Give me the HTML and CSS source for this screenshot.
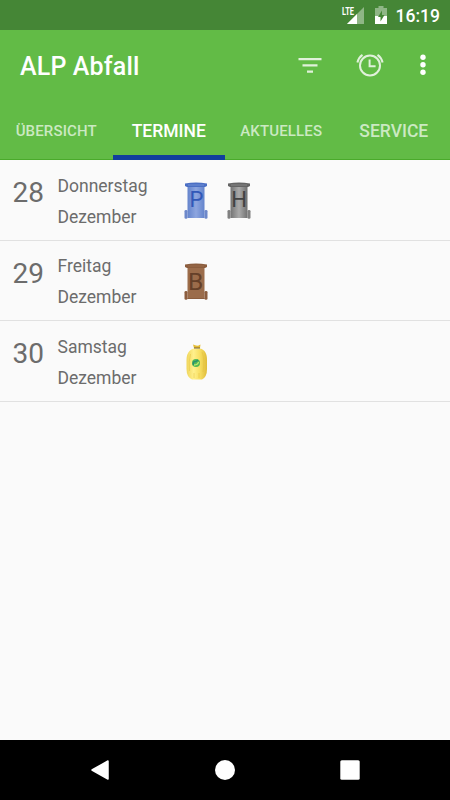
FILE: index.html
```
<!DOCTYPE html>
<html lang="de">
<head>
    <meta charset="UTF-8">
    <title>ALP Abfall</title>
    <link rel="stylesheet" href="styles.css">
</head>
<body>
<div class="status-bar">
    <svg class="signal" width="24" height="20" viewBox="0 0 24 20">
        <path d="M23 1v17H6z" fill="#fff" opacity=".4"/>
        <path d="M16 8v10H6z" fill="#fff"/>
        <text class="lte" x="1" y="8.7" textLength="12" lengthAdjust="spacingAndGlyphs">LTE</text>
    </svg>
    <svg class="battery" width="12" height="20" viewBox="0 0 12 20">
        <path d="M0 3h3.500V1h5v2H12v8H0z" fill="#fff" opacity=".4"/>
        <path d="M0 11h12v8H0z" fill="#fff"/>
        <path d="M7 5.500L3 12h2.500v4.500L9.500 10H7z" fill="#458636"/>
    </svg>
    <span class="clock">16:19</span>
</div>

<header class="toolbar">
    <h1 class="title">ALP Abfall</h1>
    <svg class="filter" width="24" height="18" viewBox="0 0 24 18">
        <path d="M.5 1h23v2.300H.5zM4.500 7.300h15v2.200h-15zM9 13.500h6v2.300H9z"/>
    </svg>
    <svg class="alarm" width="28" height="26" viewBox="0 0 28 26">
        <circle cx="14" cy="13.500" r="10"/>
        <path d="M13.600 7.500v6.700h6M1.400 10.500Q2.500 5.500 6.500 2.800M26.600 10.500Q25.500 5.500 21.500 2.800"/>
    </svg>
    <svg class="more" width="6" height="22" viewBox="0 0 6 22">
        <circle cx="3" cy="3.300" r="2.700"/>
        <circle cx="3" cy="10.800" r="2.700"/>
        <circle cx="3" cy="18.300" r="2.700"/>
    </svg>
</header>

<nav class="tabs">
    <a class="tab small">ÜBERSICHT</a>
    <a class="tab active">TERMINE</a>
    <a class="tab small">AKTUELLES</a>
    <a class="tab">SERVICE</a>
</nav>

<main class="dates">
    <div class="row">
        <span class="day">28</span>
        <div class="names"><span>Donnerstag</span><span>Dezember</span></div>
        <div class="bins">
            <svg class="bin" width="24" height="38" viewBox="0 0 24 38">
                <defs>
                    <linearGradient id="blue"><stop offset="0" stop-color="#6484cc"/><stop offset=".5" stop-color="#8ea6df"/><stop offset="1" stop-color="#6484cc"/></linearGradient>
                </defs>
                <path d="M3.500 5h17v31h-17z" fill="url(#blue)"/>
                <path d="M1 1.500q11-2 22 0V4l-2 1H3L1 4z" fill="#4b6fc4"/>
                <path d="M4 3h16" stroke="#708fd4"/>
                <rect x=".5" y="28" width="3" height="8.700" rx="1.300" fill="#6d88ca"/>
                <rect x="20.500" y="28" width="3" height="8.700" rx="1.300" fill="#6d88ca"/>
                <text x="12.500" y="25.300" fill="#3158b8">P</text>
            </svg>
            <svg class="bin" width="24" height="38" viewBox="0 0 24 38">
                <defs>
                    <linearGradient id="gray"><stop offset="0" stop-color="#747474"/><stop offset=".5" stop-color="#aaa"/><stop offset="1" stop-color="#707070"/></linearGradient>
                </defs>
                <path d="M3.500 5h17v31h-17z" fill="url(#gray)"/>
                <path d="M1 1.500q11-2 22 0V4l-2 1H3L1 4z" fill="#646464"/>
                <path d="M4 3h16" stroke="#858585"/>
                <rect x=".5" y="28" width="3" height="8.700" rx="1.300" fill="#808080"/>
                <rect x="20.500" y="28" width="3" height="8.700" rx="1.300" fill="#808080"/>
                <text x="12" y="25" fill="#424242">H</text>
            </svg>
        </div>
    </div>
    <div class="row">
        <span class="day">29</span>
        <div class="names"><span>Freitag</span><span>Dezember</span></div>
        <div class="bins">
            <svg class="bin" width="24" height="38" viewBox="0 0 24 38">
                <path d="M3.500 5h17v31h-17z" fill="#9b6c4b"/>
                <path d="M1 1.500q11-2 22 0V4l-2 1H3L1 4z" fill="#8b5d3e"/>
                <path d="M4 3h16" stroke="#9b6c4b"/>
                <path d="M3.500 35.500h17" stroke="#8b5d3e"/>
                <rect x=".5" y="28" width="3" height="8.700" rx="1.300" fill="#8b5d3e"/>
                <rect x="20.500" y="28" width="3" height="8.700" rx="1.300" fill="#8b5d3e"/>
                <text class="wide" x="11.700" y="27" fill="#654029">B</text>
            </svg>
        </div>
    </div>
    <div class="row">
        <span class="day">30</span>
        <div class="names"><span>Samstag</span><span>Dezember</span></div>
        <div class="bins">
            <svg class="bin" width="24" height="38" viewBox="0 0 24 38">
                <defs>
                    <linearGradient id="yellow"><stop offset="0" stop-color="#f0d65c"/><stop offset=".35" stop-color="#fff08c"/><stop offset=".65" stop-color="#f8df62"/><stop offset="1" stop-color="#dfbc3a"/></linearGradient>
                </defs>
                <path d="M10 5L9 1.500l3 1 2 .2 2.500-1.200L16 5z" fill="#e5bd35"/>
                <path d="M10 5.500C5 6.500 2.500 11 2.500 17v9q0 8 5.500 10.500h10q5-2.500 5-10.500v-9c0-6-2-10.500-7-11.500z" fill="url(#yellow)"/>
                <path d="M6.500 11q-2 7-1 17M18 9q3 7 1 20M10 30v5M15 30v5" fill="none" stroke="#e3bf3d" opacity=".5"/>
                <path d="M10 5h6" stroke="#7b6230"/>
                <circle cx="12" cy="20" r="4" fill="#53b955"/>
                <path d="M9.500 22q-1-4 2.500-3.500l2-1.500" fill="none" stroke="#278f72" stroke-width="1.500"/>
                <path d="M10 22q4 0 4.500-3" fill="none" stroke="#c1e86b" stroke-width="1.300"/>
            </svg>
        </div>
    </div>
</main>

<footer class="nav-bar">
    <svg width="20" height="20" viewBox="0 0 20 20"><path d="M18 1v18L2 10z" stroke="#fff" stroke-width="1.500" stroke-linejoin="round"/></svg>
    <svg width="20" height="20" viewBox="0 0 20 20"><circle cx="10" cy="10" r="10"/></svg>
    <svg width="20" height="20" viewBox="0 0 20 20"><rect x=".3" y=".3" width="19.400" height="19.400" rx="1.500"/></svg>
</footer>
</body>
</html>
```
FILE: styles.css
```
* {
    box-sizing: border-box;
}

body {
    display: flex;
    flex-direction: column;

    height: 800px;
    margin: 0;

    font-family: Roboto, sans-serif;
    color: #6c6c6c;
    background-color: #fafafa;
}

svg {
    display: block;
    flex: none;
}

.status-bar {
    display: flex;
    align-items: center;
    justify-content: flex-end;

    height: 30px;
    padding-right: 10px;

    color: #fff;
    background-color: #458636;
}

.signal {
    margin: 2px 10px 0 0;
}

.lte {
    font-size: 10px;
    font-weight: bold;

    fill: #fff;
}

.battery {
    margin: 0 9px 0 0;
}

.clock {
    font-size: 17.500px;
    font-weight: 500;
    line-height: 30px;

    padding-top: 2px;
}

.toolbar {
    display: flex;
    align-items: center;

    height: 70px;
    padding: 0 24px 0 20px;

    background-color: #62bb46;
}

.title {
    font-size: 25px;
    font-weight: 500;

    flex: 1;

    margin: 3px 0 0;

    letter-spacing: .15px;
}

.title,
.active {
    color: #fff;
}

.filter {
    margin: 1px 34px 0 0;

    fill: #e0f1da;
}

.alarm {
    margin-right: 36px;

    fill: none;
    stroke: #e0f1da;
    stroke-width: 2px;
}

.more {
    fill: #fff;
}

.tabs {
    display: grid;
    grid-template-columns: repeat(4, 1fr);

    height: 60px;

    border-bottom: 1px solid #4aaa2b;
    background-color: #62bb46;
}

.tab {
    font-size: 17.500px;
    font-weight: 500;
    line-height: 62px;

    height: 60px;

    text-align: center;

    color: #cbe9c2;
}

.small {
    font-size: 15px;

    letter-spacing: .15px;
}

.tab.active {
    color: #fff;
    border-bottom: 5px solid #113f9c;
}

.dates {
    flex: 1;
}

.row {
    display: flex;

    height: 80.500px;

    border-bottom: 1px solid #e1e1e1;
}

.day {
    font-size: 28px;
    line-height: 32px;

    width: 57.500px;
    padding: 17px 0 0 12.500px;
}

.names {
    font-size: 17.500px;
    line-height: 31px;

    display: flex;
    flex-direction: column;

    width: 126.500px;
    padding-top: 10.500px;
}

.bins {
    display: flex;
    gap: 18.500px;

    padding-top: 22px;
}

.bin text {
    font-size: 22px;

    text-anchor: middle;
}

.bin .wide {
    font-size: 24.500px;
}

.nav-bar {
    display: flex;
    align-items: center;
    justify-content: space-between;

    height: 60px;
    padding: 0 90px;

    background-color: #000;
}

.nav-bar svg {
    fill: #fff;
}
```
